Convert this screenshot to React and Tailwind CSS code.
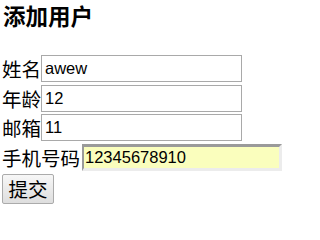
import React from 'react';

const cjk = { fontFamily: '"Noto Sans CJK SC", "Noto Sans", sans-serif' };

const fields = [
  { label: '姓名', value: 'awew' },
  { label: '年龄', value: '12' },
  { label: '邮箱', value: '11' },
];

const App = () => {
  return (
    <main className="min-h-screen w-[289px] bg-white pl-[2px] text-black font-['Noto_Sans_CJK_SC',sans-serif]">
      <h3 className="pl-[1px] text-[22.5px] font-bold leading-[30px]">添加用户</h3>

      <form className="mt-[25px] flex flex-col gap-[2.5px]">
        {fields.map((f) => (
          <div key={f.label} className="flex h-[27px] items-center">
            <span className="text-[19.5px] leading-[27px]">{f.label}</span>
            <input
              type="text"
              defaultValue={f.value}
              className="h-[27px] w-[201px] border border-[#a9a9a9] bg-white px-[3px] font-['Liberation_Sans',Arial,sans-serif] text-[16.5px] text-black outline-none"
            />
          </div>
        ))}

        <div className="flex h-[27px] items-center">
          <span className="mr-[2px] text-[19.5px] leading-[27px]">手机号码</span>
          <input
            type="text"
            defaultValue="12345678910"
            className="h-[27px] w-[200px] border-t-[3px] border-l-[2px] border-r-[3px] border-b-[3px] border-t-[#9a9a9a] border-l-[#9a9a9a] border-r-[#ececec] border-b-[#ececec] bg-[#fafebd] px-[1px] font-['Liberation_Sans',Arial,sans-serif] text-[16.5px] text-black outline-none"
          />
        </div>

        <div className="mt-[1px]">
          <button
            type="button"
            className="h-[30px] w-[52px] rounded-[2px] border border-[#ababab] bg-gradient-to-b from-[#f7f7f7] to-[#dedede] text-[19.5px] leading-[28px] text-black"
            style={cjk}
          >
            提交
          </button>
        </div>
      </form>
    </main>
  );
};

export default App;
